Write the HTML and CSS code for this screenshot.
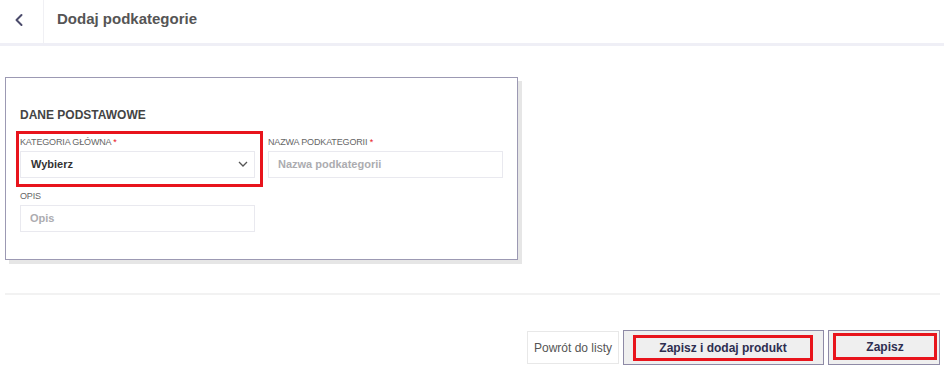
FILE: index.html
```html
<!doctype html>
<html lang="pl">
<head>
	<meta charset="UTF-8">
	<title>Dodaj podkategorie</title>
	<link rel="stylesheet" href="styles.css">
</head>
<body>
	<header class="topbar">
		<a href="#" class="back" title="Wstecz">
			<svg width="10" height="14" viewBox="0 0 10 14"><polyline points="7.5,2 2.5,7 7.5,12" fill="none" stroke="#4b4b6b" stroke-width="2" stroke-linecap="round" stroke-linejoin="round"/></svg>
		</a>
		<h1 class="title">Dodaj podkategorie</h1>
	</header>

	<div class="content">
		<form class="card" name="podkategoria" action="#" method="POST">
			<h2 class="card-title">DANE PODSTAWOWE</h2>
			<div class="fields">
				<div class="field marked">
					<label for="kategoria">KATEGORIA GŁÓWNA <span class="req">*</span></label>
					<div class="select" id="kategoria">
						<span>Wybierz</span>
						<svg width="10" height="6" viewBox="0 0 10 6"><polyline points="1,1 5,5 9,1" fill="none" stroke="#555" stroke-width="1.3"/></svg>
					</div>
				</div>
				<div class="field">
					<label for="nazwa">NAZWA PODKATEGORII <span class="req">*</span></label>
					<input type="text" id="nazwa" name="nazwa" placeholder="Nazwa podkategorii">
				</div>
				<div class="field">
					<label for="opis">OPIS</label>
					<input type="text" id="opis" name="opis" placeholder="Opis">
				</div>
			</div>
		</form>

		<hr class="sep">

		<div class="actions">
			<a href="#" class="btn btn-back">Powrót do listy</a>
			<button type="button" class="btn btn-save wide"><span class="mark">Zapisz i dodaj produkt</span></button>
			<button type="button" class="btn btn-save narrow"><span class="mark">Zapisz</span></button>
		</div>
	</div>
</body>
</html>
```

FILE: styles.css
```css
body {
	margin:0;
	font-family:"Liberation Sans", Arial, sans-serif;
	background:#fff;
	color:#333;
}

a {
	text-decoration:none;
}

.topbar {
	display:flex;
	height:43px;
	border-bottom:3px solid #efeff6;
}

.back {
	display:flex;
	align-items:center;
	justify-content:center;
	width:37px;
	height:39px;
	border-right:1px solid #f0f0f4;
	padding:0 6px 4px 0;
}

.title {
	margin:0;
	padding-left:13px;
	font-size:15px;
	line-height:38px;
	font-weight:bold;
	color:#555;
}

.content {
	padding:0 4px 0 5px;
}

.card {
	width:513px;
	box-sizing:border-box;
	margin-top:31px;
	padding:30px 14px 27px 14px;
	border:1px solid #9c99b3;
	box-shadow:4px 4px 0 #e6e6e6;
}

.card-title {
	margin:0 0 14px 0;
	font-size:12px;
	line-height:14px;
	font-weight:bold;
	color:#444;
}

.fields {
	display:grid;
	grid-template-columns:1fr 1fr;
	column-gap:13px;
	row-gap:12px;
}

.field {
	display:flex;
	flex-direction:column;
	position:relative;
}

.field label {
	font-size:9px;
	line-height:12px;
	letter-spacing:-0.15px;
	color:#666;
	margin-bottom:3px;
}

.req {
	color:#e8141c;
}

.marked::after {
	content:"";
	position:absolute;
	top:-5px;
	left:-4px;
	right:-8px;
	bottom:-9px;
	border:3px solid #e8141c;
	pointer-events:none;
}

.select,
.field input {
	box-sizing:border-box;
	height:27px;
	border:1px solid #e9e9ef;
	background:#fff;
	font-family:inherit;
	font-size:11px;
	font-weight:bold;
}

.select {
	display:flex;
	align-items:center;
	justify-content:space-between;
	padding:0 6px 2px 10px;
	color:#333;
}

.field input {
	padding:0 9px 2px 9px;
	color:#333;
	outline:none;
}

.field input::placeholder {
	color:#acacb0;
}

.sep {
	margin:33px 0 0 0;
	border:0;
	border-top:2px solid #f2f2f2;
}

.actions {
	display:flex;
	justify-content:flex-end;
	align-items:center;
	gap:4px;
	margin-top:35px;
}

.btn {
	box-sizing:border-box;
	font-family:inherit;
	font-size:12px;
}

.btn-back {
	display:flex;
	align-items:center;
	justify-content:center;
	width:92px;
	height:33px;
	border:1px solid #e8e8e8;
	color:#555;
}

.btn-save {
	display:flex;
	height:35px;
	padding:0;
	border:1px solid #8e8aa6;
	background:#efefef;
	font-weight:bold;
	color:#2e2e50;
}

.mark {
	display:flex;
	align-items:center;
	justify-content:center;
	box-sizing:border-box;
	border:3px solid #e8141c;
}

.wide {
	width:201px;
	padding:4px 10px 3px 9px;
}

.narrow {
	width:112px;
	padding:2px 2px 4px 4px;
}

.wide .mark,
.narrow .mark {
	width:100%;
	height:100%;
}
```
